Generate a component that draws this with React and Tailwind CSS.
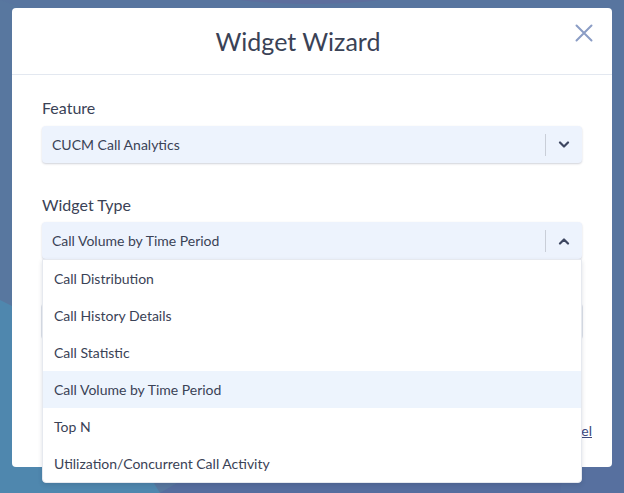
import React from "react";

const items = [
  "Call Distribution",
  "Call History Details",
  "Call Statistic",
  "Call Volume by Time Period",
  "Top N",
  "Utilization/Concurrent Call Activity",
];

function Chevron({ up }) {
  return (
    <svg width="12" height="8" viewBox="0 0 12 8" className="text-[#3d4660]">
      <path
        d={up ? "M2 6.5 L6 2.5 L10 6.5" : "M2 1.5 L6 5.5 L10 1.5"}
        fill="none"
        stroke="currentColor"
        strokeWidth="2.2"
        strokeLinecap="round"
        strokeLinejoin="round"
      />
    </svg>
  );
}

function Select({ value, up }) {
  return (
    <div className="flex h-[37px] items-center rounded-[4px] bg-[#edf3fd] shadow-[0_1px_2px_rgba(40,50,80,0.22)]">
      <span className="flex-1 pl-[10px] text-[14px] text-[#3a4256]">{value}</span>
      <span className="h-[22px] w-px bg-[#c9ced8]" />
      <span className="flex w-[36px] items-center justify-center">
        <Chevron up={up} />
      </span>
    </div>
  );
}

export default function App() {
  return (
    <div
      className="relative h-[493px] w-[624px] overflow-hidden bg-[#58779f]"
      style={{ fontFamily: "Lato, 'Open Sans', sans-serif" }}
    >
      <svg className="absolute inset-0" width="624" height="493" viewBox="0 0 624 493">
        <ellipse cx="310" cy="-30" rx="150" ry="34" fill="#62689a" />
        <polygon points="0,300 60,330 160,493 0,493" fill="#4f87ae" />
        <polygon points="160,493 250,440 624,440 624,493" fill="#566d9e" />
        <polygon points="0,0 624,0 624,493 560,493 600,200" fill="#57739f" opacity="0.5" />
      </svg>

      <div className="relative px-[12px] pt-[8px]">
        <div className="h-[459px] rounded-[4px] bg-white">
          <div className="relative flex h-[67px] items-center justify-center border-b border-[#e3e8f0] pr-[28px]">
            <h1 className="mt-[2px] text-[25px] text-[#3a4256]">Widget Wizard</h1>
            <svg
              className="absolute right-[19px] top-[16px]"
              width="18"
              height="18"
              viewBox="0 0 18 18"
            >
              <path d="M1.5 1.5 L16.5 16.5 M16.5 1.5 L1.5 16.5" stroke="#8b9dc5" strokeWidth="2" strokeLinecap="round" />
            </svg>
          </div>

          <div className="relative px-[30px] pt-[21px]">
            <div className="text-[16px] leading-[24px] text-[#3a4256]">Feature</div>
            <div className="mt-[6px]">
              <Select value="CUCM Call Analytics" />
            </div>

            <div className="mt-[30px] text-[16px] leading-[24px] text-[#3a4256]">Widget Type</div>
            <div className="relative mt-[5px]">
              <Select value="Call Volume by Time Period" up />
              <div className="absolute left-0 right-0 top-[37px] z-10 rounded-b-[4px] border border-[#e6e9ef] bg-white shadow-[0_2px_4px_rgba(30,40,70,0.15)]">
                {items.map((t) => (
                  <div
                    key={t}
                    className={`flex h-[37px] items-center pl-[11px] text-[14px] text-[#3a4256] ${
                      t === "Call Volume by Time Period" ? "bg-[#edf4fd]" : ""
                    }`}
                  >
                    {t}
                  </div>
                ))}
              </div>
            </div>

            <div className="h-[44px]" />
            <div className="ml-[-1px] mr-[-1px] h-[37px] rounded-[4px] border border-[#dfe3ea] bg-white" />

            <div className="mt-[80px] flex justify-end">
              <span className="mr-[-10px] text-[14px] text-[#3d4a7e] underline">Cancel</span>
            </div>
          </div>
        </div>
      </div>
    </div>
  );
}
